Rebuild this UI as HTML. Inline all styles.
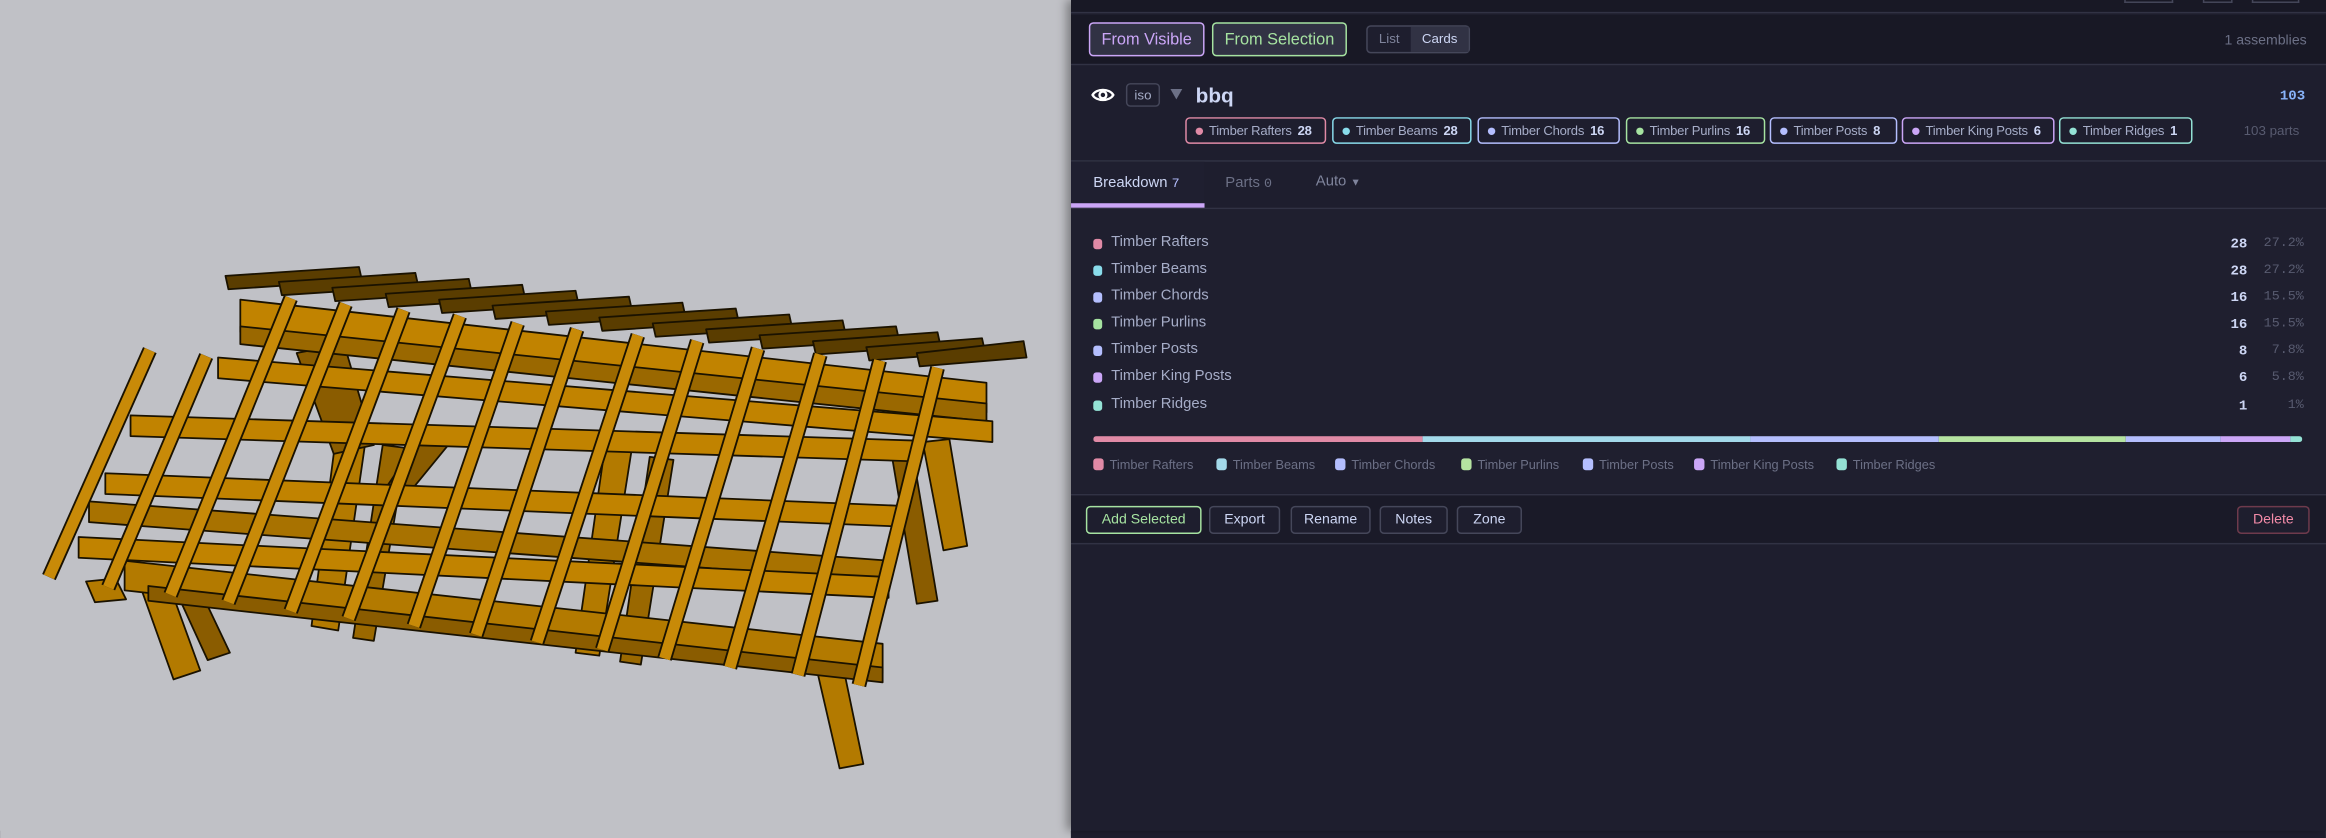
<!DOCTYPE html>
<html><head><meta charset="utf-8"><style>
*{box-sizing:border-box;margin:0;padding:0}
html,body{width:2326px;height:809px;overflow:hidden;background:linear-gradient(to right,#c0c1c6 0,#c0c1c6 1071px,#1e1e2e 1071px)}
#w{position:absolute;left:0;top:0;width:1568px;height:546px;transform:scale(1.48342);transform-origin:0 0;font-family:"Liberation Sans",sans-serif}
.a{position:absolute}
#vp{left:0;top:0;width:722px;height:560px;background:#c0c1c6}
#pn{left:722px;top:0;width:846px;height:560px;background:#1e1e2e;box-shadow:-3px 0 6px rgba(0,0,0,.35)}
.btn{position:absolute;border:1px solid #45475a;border-radius:3px;font-size:9.5px;color:#cdd6f4;display:flex;align-items:center;justify-content:center;background:#1e1e2e}
.tag{position:absolute;top:79px;height:18px;border:1px solid;border-radius:3px;font-size:8.8px;color:#a6adc8;display:flex;align-items:center;padding-left:6px;white-space:nowrap;letter-spacing:-.15px}
.tag i{display:inline-block;width:5px;height:5px;border-radius:50%;margin-right:4px}
.tag b{color:#cdd6f4;margin-left:4px;font-size:8.8px}
.row{position:absolute;left:737px;width:816px;height:14px;font-size:10px;color:#a6adc8}
.row i{position:absolute;left:0;top:3px;width:6px;height:7px;border-radius:2px}
.row span{position:absolute;left:12px;top:0}
.row b{position:absolute;right:38px;top:1px;color:#cdd6f4;font-family:"Liberation Mono",monospace;font-size:9.5px}
.row em{position:absolute;right:0;top:1px;color:#585b70;font-style:normal;font-family:"Liberation Mono",monospace;font-size:9px}
.lg{position:absolute;top:308px;font-size:8.6px;color:#6c7086;white-space:nowrap}
.lg i{display:inline-block;width:7px;height:8px;border-radius:2px;margin-right:4px;vertical-align:-1px}
</style></head><body><div id="w">
<div id="vp" class="a">
<svg width="722" height="560" viewBox="0 0 722 560">
<g stroke="#1a1200" stroke-width="1.2" stroke-linejoin="round">
<polygon points="92,388 110,383 135,452 117,458" fill="#b37a00"/>
<polygon points="112,384 126,379 155,440 140,445" fill="#8a5c00"/>
<polygon points="58,392 78,390 85,404 64,406" fill="#b37a00"/>
<polygon points="548,440 566,438 582,515 566,518" fill="#b37a00"/>
<polygon points="622,298 640,296 652,368 636,371" fill="#b37a00"/>
<polygon points="600,300 614,298 632,405 618,407" fill="#8a5c00"/>
<polygon points="226,298 246,300 228,425 210,422" fill="#b37a00"/>
<polygon points="258,300 274,302 252,432 238,430" fill="#9a6800"/>
<polygon points="408,300 426,302 404,442 388,440" fill="#b37a00"/>
<polygon points="438,308 454,310 432,448 418,446" fill="#9a6800"/>
<polygon points="200,238 232,232 252,300 225,306" fill="#8a5c00"/>
<polygon points="288,288 312,288 276,332 258,332" fill="#8a5c00"/>
<g fill="#5a3d00">
<polygon points="152,186 242,180 244,189 154,195"/>
<polygon points="188,190 280,184 282,193 190,199"/>
<polygon points="224,194 316,188 318,197 226,203"/>
<polygon points="260,198 352,192 354,201 262,207"/>
<polygon points="296,202 388,196 390,205 298,211"/>
<polygon points="332,206 424,200 426,209 334,215"/>
<polygon points="368,210 460,204 462,213 370,219"/>
<polygon points="404,214 496,208 498,217 406,223"/>
<polygon points="440,218 532,212 534,221 442,227"/>
<polygon points="476,222 568,216 570,225 478,231"/>
<polygon points="512,226 604,220 606,229 514,235"/>
<polygon points="548,230 632,224 634,233 550,239"/>
<polygon points="584,234 662,228 664,237 586,243"/>
<polygon points="618,238 690,230 692,241 620,247"/>
</g>
<polygon points="162,202 665,258 665,278 162,224" fill="#c18300"/>
<polygon points="162,220 665,272 665,284 162,232" fill="#9a6800"/>
<polygon points="147,241 669,284 669,298 147,255" fill="#c18300"/>
<polygon points="88,280 617,297 617,311 88,294" fill="#c18300"/>
<polygon points="71,319 608,341 608,355 71,333" fill="#c18300"/>
<polygon points="60,338 600,378 600,392 60,352" fill="#a87200"/>
<polygon points="53,362 599,389 599,403 53,376" fill="#c18300"/>
<polygon points="84,378 595,434 595,454 84,398" fill="#b37a00"/>
<polygon points="100,395 595,450 595,460 100,405" fill="#8a5c00"/>
</g>
<g stroke-linecap="butt">
<g stroke="#1a1200" stroke-width="10">
<line x1="33" y1="389" x2="101" y2="236"/><line x1="73" y1="396" x2="139" y2="240"/>
<line x1="115" y1="401" x2="196" y2="201"/><line x1="154" y1="406" x2="233" y2="205"/>
<line x1="196" y1="412" x2="272" y2="209"/><line x1="235" y1="417" x2="310" y2="213"/>
<line x1="279" y1="422" x2="349" y2="218"/><line x1="321" y1="428" x2="389" y2="222"/>
<line x1="362" y1="433" x2="430" y2="226"/><line x1="406" y1="438" x2="470" y2="230"/>
<line x1="448" y1="444" x2="511" y2="235"/><line x1="492" y1="450" x2="553" y2="239"/>
<line x1="538" y1="455" x2="593" y2="243"/><line x1="579" y1="462" x2="632" y2="248"/>
</g>
<g stroke="#c88a08" stroke-width="7.5">
<line x1="33" y1="389" x2="101" y2="236"/><line x1="73" y1="396" x2="139" y2="240"/>
<line x1="115" y1="401" x2="196" y2="201"/><line x1="154" y1="406" x2="233" y2="205"/>
<line x1="196" y1="412" x2="272" y2="209"/><line x1="235" y1="417" x2="310" y2="213"/>
<line x1="279" y1="422" x2="349" y2="218"/><line x1="321" y1="428" x2="389" y2="222"/>
<line x1="362" y1="433" x2="430" y2="226"/><line x1="406" y1="438" x2="470" y2="230"/>
<line x1="448" y1="444" x2="511" y2="235"/><line x1="492" y1="450" x2="553" y2="239"/>
<line x1="538" y1="455" x2="593" y2="243"/><line x1="579" y1="462" x2="632" y2="248"/>
</g></g>
</svg></div>
<div id="pn" class="a"></div>
<div class="a" style="left:722px;top:0;width:846px;height:9px;background:#181825;border-bottom:1px solid #313244"></div>
<div class="a" style="left:1432px;top:0;width:33px;height:2px;border:1px solid #45475a;border-top:0"></div>
<div class="a" style="left:1485px;top:0;width:20px;height:2px;border:1px solid #45475a;border-top:0"></div>
<div class="a" style="left:1518px;top:0;width:32px;height:2px;border:1px solid #45475a;border-top:0"></div>
<div class="a" style="left:722px;top:10px;width:846px;height:34px;background:#181825;border-bottom:1px solid #313244"></div>
<div class="btn" style="left:734px;top:15px;width:78px;height:23px;border-color:#cba6f7;color:#cba6f7;background:#313244;font-size:11px">From Visible</div>
<div class="btn" style="left:817px;top:15px;width:91px;height:23px;border-color:#a6e3a1;color:#a6e3a1;background:#313244;font-size:11px">From Selection</div>
<div class="a" style="left:921px;top:17px;width:70px;height:19px;border:1px solid #45475a;border-radius:3px;background:#1e1e2e"></div>
<div class="a" style="left:922px;top:18px;width:29px;height:17px;font-size:9px;color:#7f849c;text-align:center;line-height:17px">List</div>
<div class="a" style="left:951px;top:18px;width:39px;height:17px;font-size:9px;color:#cdd6f4;background:#313244;text-align:center;line-height:17px">Cards</div>
<div class="a" style="right:13px;top:22px;font-size:9.5px;color:#6c7086">1 assemblies</div>
<svg class="a" style="left:735px;top:57px" width="17" height="14" viewBox="0 0 17 14"><path d="M1.5 7C4 2.5 13 2.5 15.5 7C13 11.5 4 11.5 1.5 7Z" fill="none" stroke="#fff" stroke-width="1.6"/><circle cx="8.5" cy="7" r="2.3" fill="none" stroke="#fff" stroke-width="1.6"/></svg>
<div class="a" style="left:759px;top:56px;width:23px;height:16px;border:1px solid #45475a;border-radius:3px;font-size:9px;color:#a6adc8;text-align:center;line-height:14px">iso</div>
<div class="a" style="left:789px;top:60px;width:0;height:0;border-left:4px solid transparent;border-right:4px solid transparent;border-top:7px solid #6c7086"></div>
<div class="a" style="left:806px;top:56px;font-size:14px;font-weight:bold;color:#cdd6f4">bbq</div>
<div class="a" style="right:14px;top:59px;font-size:9.5px;font-weight:bold;color:#89b4fa;font-family:'Liberation Mono',monospace">103</div>
<div class="tag" style="left:799px;width:95px;border-color:#e08aa6"><i style="background:#e08aa6"></i>Timber Rafters<b>28</b></div>
<div class="tag" style="left:898px;width:94px;border-color:#89dceb"><i style="background:#89dceb"></i>Timber Beams<b>28</b></div>
<div class="tag" style="left:996px;width:96px;border-color:#b4befe"><i style="background:#b4befe"></i>Timber Chords<b>16</b></div>
<div class="tag" style="left:1096px;width:94px;border-color:#a6e3a1"><i style="background:#a6e3a1"></i>Timber Purlins<b>16</b></div>
<div class="tag" style="left:1193px;width:86px;border-color:#b4befe"><i style="background:#b4befe"></i>Timber Posts<b>8</b></div>
<div class="tag" style="left:1282px;width:103px;border-color:#cba6f7"><i style="background:#cba6f7"></i>Timber King Posts<b>6</b></div>
<div class="tag" style="left:1388px;width:90px;border-color:#94e2d5"><i style="background:#94e2d5"></i>Timber Ridges<b>1</b></div>
<div class="a" style="right:18px;top:83px;font-size:9px;color:#585b70">103 parts</div>
<div class="a" style="left:722px;top:108px;width:846px;height:1px;background:#313244"></div>
<div class="a" style="left:722px;top:140px;width:846px;height:1px;background:#313244"></div>
<div class="a" style="left:722px;top:109px;width:90px;height:31px;background:#1f1f30"></div>
<div class="a" style="left:722px;top:137px;width:90px;height:3px;background:#cba6f7"></div>
<div class="a" style="left:737px;top:118px;font-size:10px;color:#cdd6f4">Breakdown <span style="color:#b4befe;font-family:'Liberation Mono',monospace;font-size:9px">7</span></div>
<div class="a" style="left:826px;top:118px;font-size:10px;color:#6c7086">Parts <span style="font-family:'Liberation Mono',monospace;font-size:9px">0</span></div>
<div class="a" style="left:887px;top:117px;font-size:10px;color:#7f849c">Auto <span style="font-size:7px">▼</span></div>
<div class="a" style="left:722px;top:141px;width:846px;height:192px;background:#1f1f2f"></div>
<div class="row" style="top:158px"><i style="background:#e08aa6"></i><span>Timber Rafters</span><b>28</b><em>27.2%</em></div>
<div class="row" style="top:176px"><i style="background:#89dceb"></i><span>Timber Beams</span><b>28</b><em>27.2%</em></div>
<div class="row" style="top:194px"><i style="background:#b4befe"></i><span>Timber Chords</span><b>16</b><em>15.5%</em></div>
<div class="row" style="top:212px"><i style="background:#a6e3a1"></i><span>Timber Purlins</span><b>16</b><em>15.5%</em></div>
<div class="row" style="top:230px"><i style="background:#b4befe"></i><span>Timber Posts</span><b>8</b><em>7.8%</em></div>
<div class="row" style="top:248px"><i style="background:#cba6f7"></i><span>Timber King Posts</span><b>6</b><em>5.8%</em></div>
<div class="row" style="top:267px"><i style="background:#94e2d5"></i><span>Timber Ridges</span><b>1</b><em>1%</em></div>
<div class="a" style="left:737px;top:294px;width:815px;height:4px;border-radius:2px;overflow:hidden;display:flex">
<div style="width:27.2%;background:#e08aa6"></div><div style="width:27.2%;background:#a3d9ea"></div><div style="width:15.5%;background:#b4befe"></div><div style="width:15.5%;background:#b5e3a1"></div><div style="width:7.8%;background:#b4befe"></div><div style="width:5.8%;background:#cba6f7"></div><div style="width:1%;background:#94e2d5"></div></div>
<div class="lg" style="left:737px"><i style="background:#e08aa6"></i>Timber Rafters</div>
<div class="lg" style="left:820px"><i style="background:#a3d9ea"></i>Timber Beams</div>
<div class="lg" style="left:900px"><i style="background:#b4befe"></i>Timber Chords</div>
<div class="lg" style="left:985px"><i style="background:#b5e3a1"></i>Timber Purlins</div>
<div class="lg" style="left:1067px"><i style="background:#b4befe"></i>Timber Posts</div>
<div class="lg" style="left:1142px"><i style="background:#cba6f7"></i>Timber King Posts</div>
<div class="lg" style="left:1238px"><i style="background:#94e2d5"></i>Timber Ridges</div>
<div class="a" style="left:722px;top:333px;width:846px;height:34px;background:#1a1a28;border-top:1px solid #313244;border-bottom:1px solid #313244"></div>
<div class="btn" style="left:732px;top:341px;width:78px;height:19px;border-color:#a6e3a1;color:#a6e3a1;background:#1e1e2e">Add Selected</div>
<div class="btn" style="left:815px;top:341px;width:48px;height:19px">Export</div>
<div class="btn" style="left:870px;top:341px;width:54px;height:19px">Rename</div>
<div class="btn" style="left:930px;top:341px;width:46px;height:19px">Notes</div>
<div class="btn" style="left:982px;top:341px;width:44px;height:19px">Zone</div>
<div class="btn" style="left:1508px;top:341px;width:49px;height:19px;border-color:#6e3a4c;color:#f38ba8">Delete</div>
</div></body></html>
